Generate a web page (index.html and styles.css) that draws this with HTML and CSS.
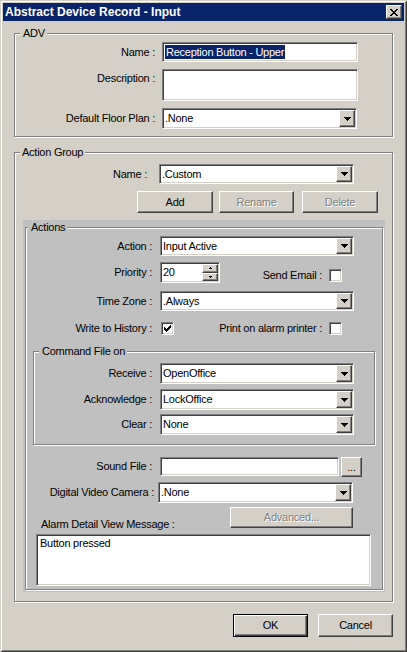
FILE: index.html
```html
<!DOCTYPE html>
<html>
<head>
<meta charset="utf-8">
<link rel="stylesheet" href="styles.css">
</head>
<body>
<div class="window">
  <div class="titlebar">
    <span class="title">Abstract Device Record - Input</span>
    <span class="close raised"><svg width="8" height="7" viewBox="0 0 8 7"><path d="M0 0h2v1h-2z M6 0h2v1h-2z M1 1h2v1h-2z M5 1h2v1h-2z M2 2h4v1h-4z M3 3h2v1h-2z M2 4h4v1h-4z M1 5h2v1h-2z M5 5h2v1h-2z M0 6h2v1h-2z M6 6h2v1h-2z"/></svg></span>
  </div>
  <div class="body">
    <div class="group adv">
      <span class="legend">ADV</span>
      <div class="row">
        <span class="lbl">Name :</span>
        <div class="sunken input w196"><span class="hl">Reception Button - Upper</span></div>
      </div>
      <div class="row top gap7">
        <span class="lbl lbl-top">Description :</span>
        <div class="sunken textbox w196 h32"></div>
      </div>
      <div class="row gap7">
        <span class="lbl">Default Floor Plan :</span>
        <div class="sunken select w195"><span class="val">.None</span><span class="dd raised"><svg width="7" height="4" viewBox="0 0 7 4"><path d="M0 0h7v1h-1v1h-1v1h-1v1h-1v-1h-1v-1h-1v-1h-1z"/></svg></span></div>
      </div>
    </div>

    <div class="group agroup">
      <span class="legend lg-ag">Action Group</span>
      <div class="row">
        <span class="lbl">Name :</span>
        <div class="sunken select w195 h20"><span class="val">.Custom</span><span class="dd raised"><svg width="7" height="4" viewBox="0 0 7 4"><path d="M0 0h7v1h-1v1h-1v1h-1v1h-1v-1h-1v-1h-1v-1h-1z"/></svg></span></div>
      </div>
      <div class="btnrow">
        <span class="btn raised b-add">Add</span>
        <span class="btn raised disabled b-rename">Rename</span>
        <span class="btn raised disabled b-delete">Delete</span>
      </div>

      <div class="panel">
        <div class="group actions">
          <span class="legend lg-actions">Actions</span>
          <div class="row">
            <span class="lbl">Action :</span>
            <div class="sunken select w194 h20"><span class="val">Input Active</span><span class="dd raised"><svg width="7" height="4" viewBox="0 0 7 4"><path d="M0 0h7v1h-1v1h-1v1h-1v1h-1v-1h-1v-1h-1v-1h-1z"/></svg></span></div>
          </div>
          <div class="row r-prio">
            <span class="lbl">Priority :</span>
            <div class="sunken spin">
              <span class="val">20</span>
              <span class="spinbtns">
                <span class="sb raised"><svg width="3" height="2" viewBox="0 0 3 2"><path d="M1 0h1v1h1v1h-3v-1h1z"/></svg></span>
                <span class="sb raised"><svg width="3" height="2" viewBox="0 0 3 2"><path d="M0 0h3v1h-1v1h-1v-1h-1z"/></svg></span>
              </span>
            </div>
            <span class="rcheck low">
              <span class="clbl">Send Email :</span>
              <span class="cb sunken"></span>
            </span>
          </div>
          <div class="row r-tz">
            <span class="lbl">Time Zone :</span>
            <div class="sunken select w194 h20"><span class="val">.Always</span><span class="dd raised"><svg width="7" height="4" viewBox="0 0 7 4"><path d="M0 0h7v1h-1v1h-1v1h-1v1h-1v-1h-1v-1h-1v-1h-1z"/></svg></span></div>
          </div>
          <div class="row r-wth">
            <span class="lbl lbl-cb">Write to History :</span>
            <span class="cb sunken"><svg width="7" height="7" viewBox="0 0 7 7"><path d="M6 0h1v1h-1z M5 1h2v1h-2z M0 2h1v1h-1z M4 2h3v1h-3z M0 3h2v1h-2z M3 3h3v1h-3z M0 4h5v1h-5z M1 5h3v1h-3z M2 6h1v1h-1z"/></svg></span>
            <span class="rcheck">
              <span class="clbl">Print on alarm printer :</span>
              <span class="cb sunken"></span>
            </span>
          </div>

          <div class="group cmd">
            <span class="legend lg-cmd">Command File on</span>
            <div class="row">
              <span class="lbl">Receive :</span>
              <div class="sunken select w194"><span class="val">OpenOffice</span><span class="dd raised"><svg width="7" height="4" viewBox="0 0 7 4"><path d="M0 0h7v1h-1v1h-1v1h-1v1h-1v-1h-1v-1h-1v-1h-1z"/></svg></span></div>
            </div>
            <div class="row gap5">
              <span class="lbl">Acknowledge :</span>
              <div class="sunken select w194"><span class="val">LockOffice</span><span class="dd raised"><svg width="7" height="4" viewBox="0 0 7 4"><path d="M0 0h7v1h-1v1h-1v1h-1v1h-1v-1h-1v-1h-1v-1h-1z"/></svg></span></div>
            </div>
            <div class="row gap4">
              <span class="lbl">Clear :</span>
              <div class="sunken select w194"><span class="val">None</span><span class="dd raised"><svg width="7" height="4" viewBox="0 0 7 4"><path d="M0 0h7v1h-1v1h-1v1h-1v1h-1v-1h-1v-1h-1v-1h-1z"/></svg></span></div>
            </div>
          </div>

          <div class="row r-sound">
            <span class="lbl">Sound File :</span>
            <div class="sunken input w179 h19"></div>
            <span class="btn raised b-browse">...</span>
          </div>
          <div class="row gap5">
            <span class="lbl lbl-dvc">Digital Video Camera :</span>
            <div class="sunken select w195"><span class="val">.None</span><span class="dd raised"><svg width="7" height="4" viewBox="0 0 7 4"><path d="M0 0h7v1h-1v1h-1v1h-1v1h-1v-1h-1v-1h-1v-1h-1z"/></svg></span></div>
          </div>
          <div class="row r-adv">
            <span class="alarm-lbl">Alarm Detail View Message :</span>
            <span class="btn raised disabled b-advanced">Advanced...</span>
          </div>
          <div class="sunken textbox msg">Button pressed</div>
        </div>
      </div>
    </div>

    <div class="footer">
      <span class="btn default b-ok">OK</span>
      <span class="btn raised b-cancel">Cancel</span>
    </div>
  </div>
</div>
</body>
</html>
```

FILE: styles.css
```css
html, body {
  margin: 0;
  padding: 0;
  overflow: hidden;
}
body {
  font: 11px/13px "Liberation Sans", Arial, sans-serif;
  letter-spacing: -0.25px;
  color: #000;
  background: #d4d0c8;
}
.window {
  width: 407px;
  height: 652px;
  box-sizing: border-box;
  padding: 3px;
  background: #d4d0c8;
  box-shadow: inset 1px 1px #d4d0c8, inset -1px -1px #404040, inset 2px 2px #fff, inset -2px -2px #808080;
}
.titlebar {
  height: 18px;
  background: #0a246a;
  display: flex;
  align-items: center;
  justify-content: space-between;
  padding: 0 2px;
}
.title {
  color: #fff;
  font: bold 12px/18px "Liberation Sans", Arial, sans-serif;
  letter-spacing: 0;
}
.close {
  width: 16px;
  height: 14px;
  display: flex;
  align-items: center;
  justify-content: center;
}
.body {
  padding: 12px 0 0 11px;
}

/* bevels */
.raised {
  box-sizing: border-box;
  background: #d4d0c8;
  border: 1px solid;
  border-color: #fff #404040 #404040 #fff;
  box-shadow: inset -1px -1px #808080;
}
.sunken {
  box-sizing: border-box;
  background: #fff;
  border: 1px solid;
  border-color: #808080 #fff #fff #808080;
  box-shadow: inset 1px 1px #404040, inset -1px -1px #d4d0c8;
}

/* group boxes */
.group {
  position: relative;
  box-sizing: border-box;
  border: 1px solid #808080;
  box-shadow: inset 1px 1px #fff, 1px 1px #fff;
}
.legend {
  position: absolute;
  top: -7px;
  left: 5px;
  padding: 0 2px 0 3px;
  background: #d4d0c8;
  line-height: 13px;
  white-space: nowrap;
}
.lg-ag { padding-left: 2px; }
.panel .legend { background: #c0c0c0; }
.lg-actions { left: 2px; padding-left: 3px; }

.row {
  display: flex;
  align-items: center;
}
.row.top { align-items: flex-start; }
.gap7 { margin-top: 7px; }
.gap5 { margin-top: 5px; }
.gap4 { margin-top: 4px; }
.lbl {
  flex: none;
  text-align: right;
  white-space: nowrap;
}
.lbl-top { padding-top: 3px; }

/* controls */
.input {
  height: 20px;
  display: flex;
  align-items: center;
  padding-left: 2px;
}
.hl {
  background: #0a246a;
  color: #fff;
  line-height: 14px;
  padding: 0 1px 0 1px;
}
.textbox { display: block; }
.select {
  height: 21px;
  display: flex;
  align-items: stretch;
  padding: 1px;
}
.select.h20 { height: 20px; }
.val {
  flex: 1;
  display: flex;
  align-items: center;
  padding-left: 1px;
  white-space: nowrap;
}
.dd {
  flex: none;
  width: 16px;
  display: flex;
  align-items: center;
  justify-content: center;
}
.w194 { width: 194px; }
.w195 { width: 195px; }
.w196 { width: 196px; }
.w179 { width: 179px; }
.h32 { height: 32px; }
.h19 { height: 19px; }

.btn {
  box-sizing: border-box;
  display: flex;
  align-items: center;
  justify-content: center;
  flex: none;
  width: 75px;
  height: 22px;
}
.disabled {
  color: #808080;
  text-shadow: 1px 1px 0 #fff;
}
.default {
  background: #d4d0c8;
  border: 1px solid #000;
  box-shadow: inset 1px 1px #fff, inset -1px -1px #404040, inset -2px -2px #808080;
}

.cb {
  flex: none;
  width: 13px;
  height: 13px;
  display: flex;
  align-items: center;
  justify-content: center;
}
.spin {
  width: 60px;
  height: 21px;
  display: flex;
  padding: 1px;
}
.spin .val { padding-left: 1px; }
.spinbtns {
  width: 16px;
  display: flex;
  flex-direction: column;
}
.sb {
  flex: 1;
  display: flex;
  align-items: center;
  justify-content: center;
}

/* ADV */
.adv {
  width: 379px;
  padding: 8px 0 7px;
}
.adv .lbl { width: 140px; margin-right: 7px; }

/* Action group */
.agroup {
  width: 379px;
  margin-top: 15px;
  padding: 11px 0 9px;
}
.agroup > .row .lbl { width: 132px; margin-right: 12px; }
.btnrow {
  display: flex;
  margin-top: 7px;
}
.b-add { margin-left: 122px; width: 76px; }
.b-rename { margin-left: 6px; }
.b-delete { margin-left: 8px; width: 76px; }

.panel {
  width: 362px;
  margin: 7px 0 0 8px;
  background: #c0c0c0;
  padding: 7px 2px 2px;
  box-sizing: border-box;
}
.actions {
  width: 358px;
  padding: 8px 0 3px;
}
.actions .lbl { width: 126px; margin-right: 8px; }
.r-prio { margin-top: 6px; height: 21px; }
.rcheck {
  margin-left: auto;
  margin-right: 40px;
  display: flex;
  align-items: center;
}
.rcheck.low {
  align-self: flex-end;
  margin-bottom: 1px;
}
.clbl { margin-right: 7px; white-space: nowrap; }
.r-tz { margin-top: 8px; }
.r-wth { margin-top: 11px; height: 13px; }
.actions .lbl-cb { margin-right: 9px; }

.cmd {
  width: 342px;
  margin: 16px 0 0 7px;
  padding: 11px 0 9px;
}
.cmd .lbl { width: 118px; margin-right: 8px; }

.r-sound { margin-top: 12px; align-items: flex-start; }
.b-browse { width: 21px; height: 20px; margin-left: 2px; }
.actions .lbl-dvc { width: 128px; margin-right: 4px; }
.r-sound .lbl { padding-top: 3px; }

.r-adv {
  margin-top: 4px;
  align-items: flex-end;
}
.alarm-lbl {
  margin-left: 15px;
  margin-bottom: -3px;
  white-space: nowrap;
}
.b-advanced {
  margin-left: auto;
  margin-right: 29px;
  width: 123px;
  height: 21px;
}
.msg {
  width: 335px;
  height: 52px;
  margin: 6px 0 0 10px;
  padding: 2px 3px;
}

.footer {
  display: flex;
  margin-top: 12px;
  padding-left: 219px;
}
.b-ok { width: 75px; height: 23px; }
.b-cancel { width: 75px; height: 23px; margin-left: 10px; }
```
